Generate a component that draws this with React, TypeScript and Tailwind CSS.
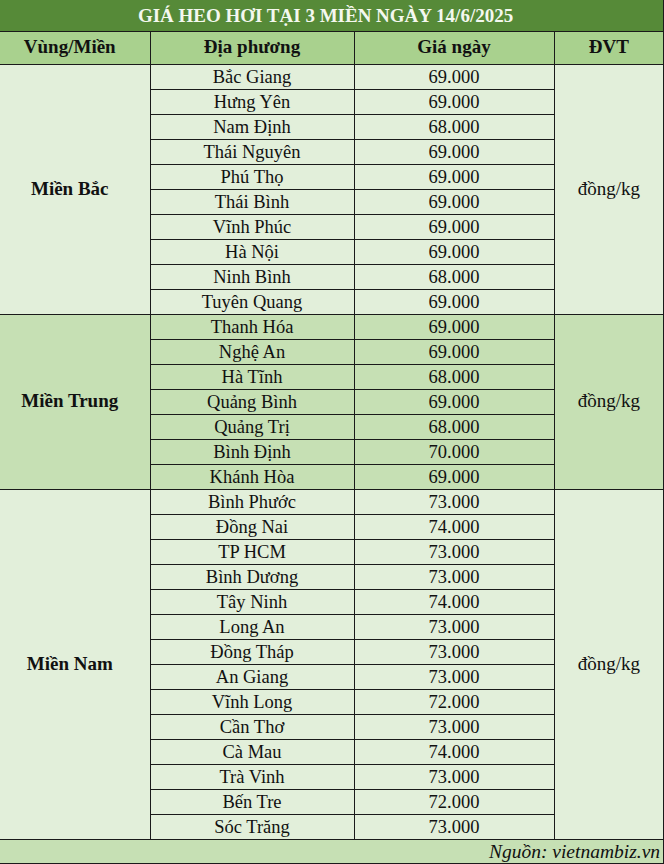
const regions = [
  {
    name: "Miền Bắc",
    bg: "bg-[#e2efda]",
    rows: [
      ["Bắc Giang", "69.000"],
      ["Hưng Yên", "69.000"],
      ["Nam Định", "68.000"],
      ["Thái Nguyên", "69.000"],
      ["Phú Thọ", "69.000"],
      ["Thái Bình", "69.000"],
      ["Vĩnh Phúc", "69.000"],
      ["Hà Nội", "69.000"],
      ["Ninh Bình", "68.000"],
      ["Tuyên Quang", "69.000"],
    ],
  },
  {
    name: "Miền Trung",
    bg: "bg-[#c6e0b4]",
    rows: [
      ["Thanh Hóa", "69.000"],
      ["Nghệ An", "69.000"],
      ["Hà Tĩnh", "68.000"],
      ["Quảng Bình", "69.000"],
      ["Quảng Trị", "68.000"],
      ["Bình Định", "70.000"],
      ["Khánh Hòa", "69.000"],
    ],
  },
  {
    name: "Miền Nam",
    bg: "bg-[#e2efda]",
    rows: [
      ["Bình Phước", "73.000"],
      ["Đồng Nai", "74.000"],
      ["TP HCM", "73.000"],
      ["Bình Dương", "73.000"],
      ["Tây Ninh", "74.000"],
      ["Long An", "73.000"],
      ["Đồng Tháp", "73.000"],
      ["An Giang", "73.000"],
      ["Vĩnh Long", "72.000"],
      ["Cần Thơ", "73.000"],
      ["Cà Mau", "74.000"],
      ["Trà Vinh", "73.000"],
      ["Bến Tre", "72.000"],
      ["Sóc Trăng", "73.000"],
    ],
  },
];

export default function App() {
  return (
    <div className="w-[664px] h-[864px] overflow-hidden bg-white font-[family-name:'Liberation_Serif','Times_New_Roman',serif] text-[18.5px] text-[#111]">
      <table className="w-[664px] border-collapse table-fixed">
        <colgroup>
          <col className="w-[150px]" />
          <col className="w-[204px]" />
          <col className="w-[200px]" />
          <col className="w-[110px]" />
        </colgroup>
        <thead>
          <tr className="h-[31px]">
            <th
              colSpan={4}
              className="bg-[#568a38] border-b border-r-2 border-[#1a1a1a] text-[19px] font-bold text-[#f4f8ef] leading-none pr-[12px]"
            >
              GIÁ HEO HƠI TẠI 3 MIỀN NGÀY 14/6/2025
            </th>
          </tr>
          <tr className="h-[33px] bg-[#a9d18e] font-bold text-[19px]">
            <th className="border-b border-r border-[#1a1a1a] pr-[10px]">Vùng/Miền</th>
            <th className="border-b border-r border-[#1a1a1a]">Địa phương</th>
            <th className="border-b border-r border-[#1a1a1a]">Giá ngày</th>
            <th className="border-b border-r-2 border-[#1a1a1a]">ĐVT</th>
          </tr>
        </thead>
        <tbody>
          {regions.map((region) =>
            region.rows.map(([place, price], i) => (
              <tr key={place} className={`h-[25px] ${region.bg}`}>
                {i === 0 && (
                  <td
                    rowSpan={region.rows.length}
                    className="border-b border-r border-[#1a1a1a] text-center font-bold text-[19px] pr-[10px]"
                  >
                    {region.name}
                  </td>
                )}
                <td className="border-b border-r border-[#1a1a1a] text-center leading-none pt-px">
                  {place}
                </td>
                <td className="border-b border-r border-[#1a1a1a] text-center leading-none pt-px">
                  {price}
                </td>
                {i === 0 && (
                  <td
                    rowSpan={region.rows.length}
                    className="border-b border-r-2 border-[#1a1a1a] text-center text-[19px]"
                  >
                    đồng/kg
                  </td>
                )}
              </tr>
            ))
          )}
          <tr className="h-[25px] bg-[#c6e0b4]">
            <td
              colSpan={4}
              className="border-b-2 border-r-2 border-[#1a1a1a] text-right italic text-[19.5px] pr-[3px] leading-none"
            >
              Nguồn: vietnambiz.vn
            </td>
          </tr>
        </tbody>
      </table>
    </div>
  );
}
